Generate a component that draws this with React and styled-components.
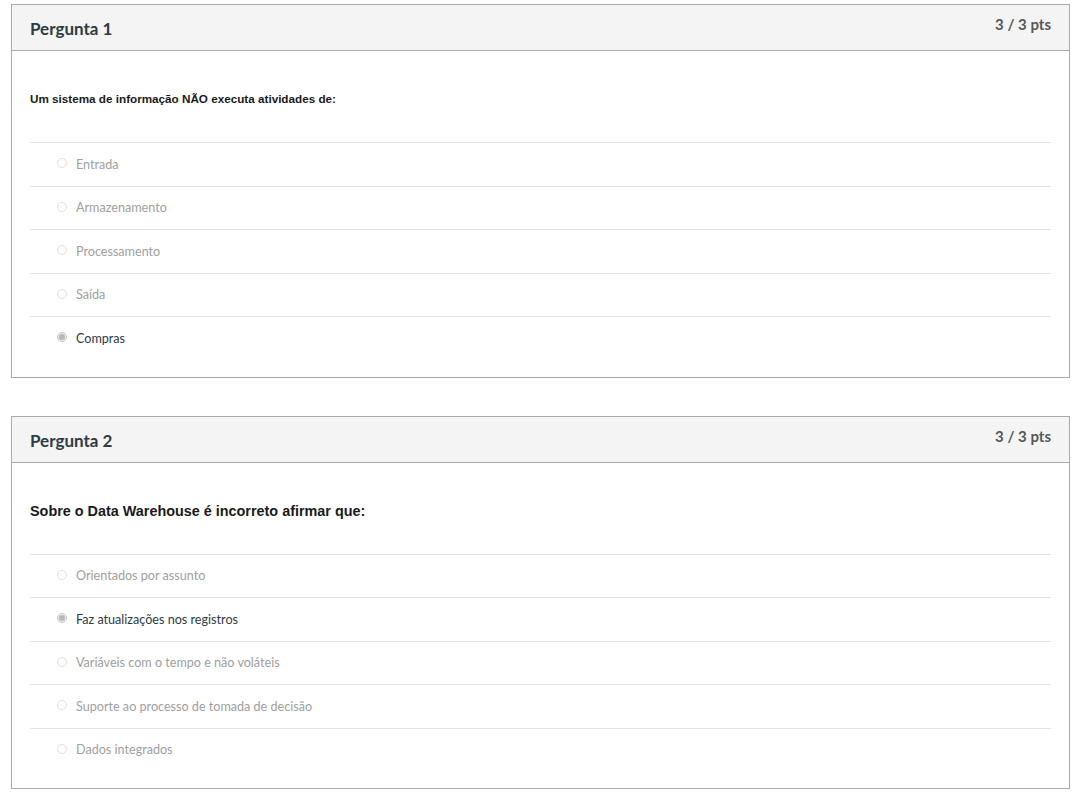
import React from "react";
import styled, { createGlobalStyle } from "styled-components";

// styles
const GlobalStyle = createGlobalStyle`
  html, body {
    margin: 0;
    padding: 0;
    background: #fff;
  }
  body {
    font-family: Lato, "Liberation Sans", sans-serif;
  }
`;

const Page = styled.div`
  padding: 4px 0 20px 11px;
  display: flex;
  flex-direction: column;
  gap: 38px;
`;

const Card = styled.section`
  width: 1059px;
  box-sizing: border-box;
  border: 1px solid #aaaaaa;
  background: #fff;
`;

const Header = styled.header`
  height: 46px;
  box-sizing: border-box;
  background: #f4f4f4;
  border-bottom: 1px solid #aaaaaa;
  display: flex;
  justify-content: space-between;
  align-items: flex-start;
  padding: 0 18px;
`;

const Title = styled.h2`
  margin: 0;
  padding-top: 13px;
  font-size: 17px;
  line-height: 22px;
  font-weight: 700;
  color: #2d3b45;
`;

const Points = styled.span`
  padding-top: 9px;
  font-size: 15px;
  line-height: 20px;
  font-weight: 700;
  color: #565656;
`;

const Body = styled.div`
  padding: 36px 18px 17px;
`;

const Question = styled.p`
  margin: 0 0 31px;
  font-family: "Liberation Sans", Arial, sans-serif;
  font-weight: 700;
  font-size: ${(p) => p.size}px;
  line-height: 24px;
  color: #1a1a1a;
`;

const Answers = styled.ul`
  list-style: none;
  margin: 0;
  padding: 0;
`;

const Answer = styled.li`
  height: 43.5px;
  box-sizing: border-box;
  border-top: 1px solid #e4e4e4;
  display: flex;
  align-items: center;
  padding-left: 27px;
  font-size: 12.6px;
  color: ${(p) => (p.selected ? "#2d3b45" : "#a0a0a0")};
`;

const Radio = styled.span`
  width: 10px;
  height: 10px;
  border-radius: 50%;
  box-sizing: border-box;
  border: 1px solid ${(p) => (p.selected ? "#c8c8c8" : "#e0e0e0")};
  background: ${(p) => (p.selected ? "#ededed" : "#fff")};
  margin-right: 9px;
  margin-top: -2px;
  display: flex;
  align-items: center;
  justify-content: center;
  &::after {
    content: "";
    width: 6px;
    height: 6px;
    border-radius: 50%;
    background: ${(p) => (p.selected ? "#b8b8b8" : "transparent")};
  }
`;
// end styles

const questions = [
  {
    title: "Pergunta 1",
    text: "Um sistema de informação NÃO executa atividades de:",
    size: 11.7,
    answers: ["Entrada", "Armazenamento", "Processamento", "Saída", "Compras"],
    selected: 4,
  },
  {
    title: "Pergunta 2",
    text: "Sobre o Data Warehouse é incorreto afirmar que:",
    size: 14.4,
    answers: [
      "Orientados por assunto",
      "Faz atualizações nos registros",
      "Variáveis com o tempo e não voláteis",
      "Suporte ao processo de tomada de decisão",
      "Dados integrados",
    ],
    selected: 1,
  },
];

const App = () => {
  return (
    <>
      <GlobalStyle />
      <Page>
        {questions.map((q) => (
          <Card key={q.title}>
            <Header>
              <Title>{q.title}</Title>
              <Points>3 / 3 pts</Points>
            </Header>
            <Body>
              <Question size={q.size}>{q.text}</Question>
              <Answers>
                {q.answers.map((a, i) => (
                  <Answer key={a} selected={i === q.selected}>
                    <Radio selected={i === q.selected} />
                    {a}
                  </Answer>
                ))}
              </Answers>
            </Body>
          </Card>
        ))}
      </Page>
    </>
  );
};

export default App;
